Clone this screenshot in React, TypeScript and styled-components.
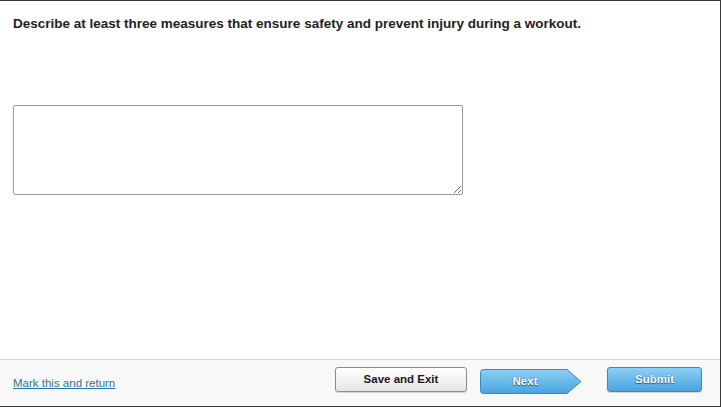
import React from "react";
import styled, { createGlobalStyle } from "styled-components";

const GlobalStyle = createGlobalStyle`
  html, body {
    margin: 0;
    padding: 0;
    background: #ffffff;
  }
  body {
    font-family: "Liberation Sans", Arial, sans-serif;
  }
`;

const Frame = styled.div`
  box-sizing: border-box;
  width: 721px;
  height: 407px;
  border-top: 1px solid #3a3a3a;
  border-right: 1px solid #3a3a3a;
  border-bottom: 1px solid #3a3a3a;
  display: flex;
  flex-direction: column;
  background: #fff;
`;

const Main = styled.main`
  flex: 1;
  padding: 15px 13px 0;
`;

const Question = styled.p`
  margin: 0;
  font-size: 13.5px;
  line-height: 15px;
  font-weight: 700;
  color: #222;
`;

const Answer = styled.textarea`
  display: block;
  box-sizing: border-box;
  margin-top: 74px;
  width: 450px;
  height: 90px;
  border: 1px solid #9a9a9a;
  border-radius: 2px;
  padding: 4px;
  font-family: "Liberation Sans", Arial, sans-serif;
  font-size: 13px;
  outline: none;
`;

const Footer = styled.footer`
  box-sizing: border-box;
  height: 47px;
  border-top: 1px solid #d6d6d6;
  background: #f8f8f8;
  display: flex;
  align-items: center;
  padding: 0 18px 0 13px;
`;

const MarkLink = styled.a`
  font-size: 11.5px;
  color: #2c7797;
  text-decoration: underline;
  cursor: pointer;
`;

const SaveButton = styled.button`
  box-sizing: border-box;
  margin-left: auto;
  width: 132px;
  height: 25px;
  margin-top: -8px;
  border: 1px solid #8c8c8c;
  border-radius: 3px;
  background: linear-gradient(#ffffff, #e6e6e6);
  box-shadow: 0 1px 1px rgba(0, 0, 0, 0.15);
  font-family: "Liberation Sans", Arial, sans-serif;
  font-size: 11.5px;
  font-weight: 700;
  color: #1a1a1a;
  padding: 0;
  cursor: pointer;
`;

const NextButton = styled.button`
  position: relative;
  box-sizing: border-box;
  margin-left: 13px;
  margin-top: -4px;
  width: 102px;
  height: 25px;
  border: none;
  background: transparent;
  padding: 0 12px 0 0;
  font-family: "Liberation Sans", Arial, sans-serif;
  font-size: 11.5px;
  font-weight: 700;
  color: #ffffff;
  text-shadow: 0 0 1px #2a6f9c, 0 1px 1px rgba(20, 70, 110, 0.8);
  cursor: pointer;

  svg {
    position: absolute;
    inset: 0;
  }
`;

const Label = styled.span`
  position: relative;
`;

const SubmitButton = styled.button`
  box-sizing: border-box;
  margin-left: 25px;
  margin-top: -8px;
  width: 95px;
  height: 25px;
  border: 1px solid #3b88bd;
  border-radius: 3px;
  background: linear-gradient(#8ccff5, #4aa4df);
  box-shadow: 0 1px 1px rgba(0, 0, 0, 0.15);
  font-family: "Liberation Sans", Arial, sans-serif;
  font-size: 11.5px;
  font-weight: 700;
  color: #ffffff;
  text-shadow: 0 0 1px #2a6f9c, 0 1px 1px rgba(20, 70, 110, 0.8);
  padding: 0;
  cursor: pointer;
`;

const NextShape = () => (
  <svg width="102" height="25" viewBox="0 0 102 25">
    <defs>
      <linearGradient id="nextFill" x1="0" y1="0" x2="0" y2="1">
        <stop offset="0" stopColor="#8ccff5" />
        <stop offset="1" stopColor="#4aa4df" />
      </linearGradient>
    </defs>
    <path
      d="M3.5 0.5 H87 L101 12.5 L87 24.5 H3.5 Q0.5 24.5 0.5 21.5 V3.5 Q0.5 0.5 3.5 0.5 Z"
      fill="url(#nextFill)"
      stroke="#3b88bd"
      strokeWidth="1"
    />
  </svg>
);

export default function App() {
  return (
    <>
      <GlobalStyle />
      <Frame>
        <Main>
          <Question>
            Describe at least three measures that ensure safety and prevent injury during a workout.
          </Question>
          <Answer aria-label="Answer" />
        </Main>
        <Footer>
          <MarkLink>Mark this and return</MarkLink>
          <SaveButton type="button">Save and Exit</SaveButton>
          <NextButton type="button">
            <NextShape />
            <Label>Next</Label>
          </NextButton>
          <SubmitButton type="button">Submit</SubmitButton>
        </Footer>
      </Frame>
    </>
  );
}
